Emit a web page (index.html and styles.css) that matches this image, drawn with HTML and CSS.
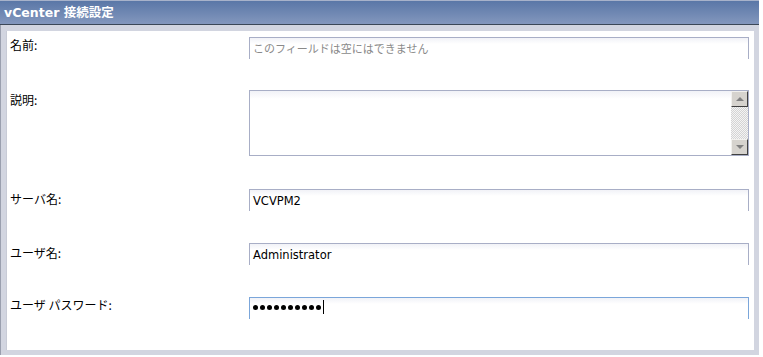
FILE: index.html
```html
<!DOCTYPE html>
<html lang="ja">
<head>
<meta charset="utf-8">
<link rel="stylesheet" href="styles.css">
</head>
<body>
<div class="panel">
  <div class="header">vCenter 接続設定</div>
  <div class="frame">
    <div class="content">
      <div class="row row-name">
        <div class="label">名前:</div>
        <div class="field"><span class="placeholder">このフィールドは空にはできません</span></div>
      </div>
      <div class="row row-desc">
        <div class="label">説明:</div>
        <div class="textarea">
          <div class="scroll">
            <div class="sbtn"><span class="arr up"></span></div>
            <div class="track"></div>
            <div class="sbtn"><span class="arr down"></span></div>
          </div>
        </div>
      </div>
      <div class="row row-std">
        <div class="label">サーバ名:</div>
        <div class="field"><span class="value">VCVPM2</span></div>
      </div>
      <div class="row row-std">
        <div class="label">ユーザ名:</div>
        <div class="field"><span class="value">Administrator</span></div>
      </div>
      <div class="row row-std">
        <div class="label label-pw">ユーザ パスワード:</div>
        <div class="field focus">
          <span class="dots"><i></i><i></i><i></i><i></i><i></i><i></i><i></i><i></i><i></i><i></i></span><span class="caret"></span>
        </div>
      </div>
    </div>
  </div>
</div>
</body>
</html>
```
FILE: styles.css
```css
html, body {
  margin: 0;
  padding: 0;
  background: #ffffff;
}
body {
  font-family: "Noto Sans CJK JP", "DejaVu Sans", sans-serif;
  font-size: 12px;
  color: #000;
}
.panel {
  width: 759px;
  height: 355px;
  display: flex;
  flex-direction: column;
  background: #d2d5e0;
}
.header {
  height: 23px;
  border-top: 1px solid #a7b2ca;
  border-bottom: 1px solid #3b4757;
  background: linear-gradient(#5a77a7, #8397bd);
  color: #fff;
  font-family: "DejaVu Sans", "Noto Sans CJK JP", sans-serif;
  font-weight: bold;
  font-size: 12.5px;
  line-height: 23px;
  padding-left: 4px;
  box-sizing: content-box;
}
.frame {
  flex: 1;
  padding: 6px 5px 5px 5px;
  border-left: 1px solid #9a9fae;
  display: flex;
}
.content {
  flex: 1;
  background: #fff;
  display: flex;
  flex-direction: column;
  padding: 6px 0 0 0;
  border-left: 1px solid #c8cbd6;
}
.row {
  display: flex;
  align-items: flex-start;
}
.label {
  width: 242px;
  padding-left: 3px;
  box-sizing: border-box;
  padding-top: 2px;
  line-height: 16px;
}
.row-name .label { padding-top: 0; }
.label-pw { padding-top: 0; }
.row-name { height: 22px; margin-bottom: 31px; }
.row-desc { height: 66px; margin-bottom: 33px; }
.row-std { height: 22px; margin-bottom: 32px; }
.row-std:last-child { margin-bottom: 0; }

.field {
  position: relative;
  width: 500px;
  height: 22px;
  box-sizing: border-box;
  border-top: 1px solid #a8aec6;
  background: linear-gradient(#f1f2f7, #ffffff 6px, #ffffff);
  padding-left: 4px;
  display: flex;
  align-items: center;
}
.field::before,
.field::after {
  content: "";
  position: absolute;
  top: -1px;
  width: 1px;
  height: 22px;
  background: #a8aec6;
}
.field::before { left: 0; }
.field::after { right: 0; }
.field.focus { border-top-color: #7ba6da; }
.field.focus::before,
.field.focus::after { background: #7ba6da; }

.placeholder {
  color: #8a8a8a;
  font-size: 11px;
  margin-top: -2px;
}
.value {
  font-family: "DejaVu Sans", sans-serif;
  font-size: 11.5px;
  color: #000;
  margin-top: 0;
}
.dots {
  display: flex;
  gap: 2px;
  margin-top: -3px;
}
.dots i {
  display: block;
  width: 5px;
  height: 5px;
  border-radius: 50%;
  background: #000;
}
.caret {
  display: block;
  width: 1px;
  height: 14px;
  background: #000;
  margin-left: 2px;
  margin-top: -3px;
}

.textarea {
  width: 500px;
  height: 66px;
  box-sizing: border-box;
  border: 1px solid #a8aec6;
  background: linear-gradient(#f1f2f7, #ffffff 8px, #ffffff);
  display: flex;
  justify-content: flex-end;
}
.scroll {
  width: 17px;
  display: flex;
  flex-direction: column;
  background-color: #ebebeb;
  background-image: repeating-conic-gradient(#d4d4d4 0 25%, #f4f4f4 0 50%);
  background-size: 2px 2px;
}
.sbtn {
  height: 16px;
  box-sizing: border-box;
  background: #d6d3ce;
  border-top: 1px solid #f2f1ee;
  border-left: 1px solid #f2f1ee;
  border-right: 1px solid #404040;
  border-bottom: 1px solid #404040;
  display: flex;
  align-items: center;
  justify-content: center;
}
.track { flex: 1; }
.arr {
  width: 0;
  height: 0;
  border-left: 4px solid transparent;
  border-right: 4px solid transparent;
}
.arr.up { border-bottom: 4px solid #808080; }
.arr.down { border-top: 4px solid #808080; }
```
